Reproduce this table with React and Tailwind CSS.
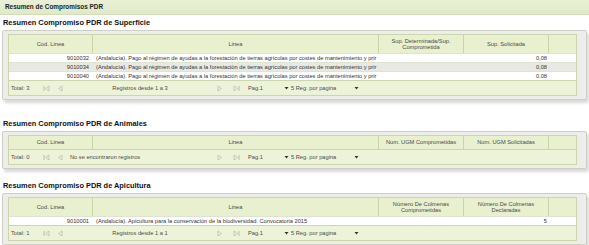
import React from 'react';

const font = { fontFamily: '"Liberation Sans", Arial, sans-serif' };

const Triangle = ({ dir = 'left', bar = false }) => (
    <svg width="7" height="7" viewBox="0 0 7 7" className="shrink-0">
        {dir === 'left' ? (
            <>
                {bar && <rect x="0.5" y="1" width="1" height="5" fill="#b9bfb0" />}
                <path d="M6 1 L2.5 3.5 L6 6 Z" fill="none" stroke="#b9bfb0" strokeWidth="0.8" />
            </>
        ) : (
            <>
                <path d="M1 1 L4.5 3.5 L1 6 Z" fill="none" stroke="#b9bfb0" strokeWidth="0.8" />
                {bar && <rect x="5.5" y="1" width="1" height="5" fill="#b9bfb0" />}
            </>
        )}
    </svg>
);

const Caret = () => (
    <svg width="5" height="4" viewBox="0 0 5 4" className="shrink-0">
        <path d="M0.5 1 L4.5 1 L2.5 3.5 Z" fill="#333" />
    </svg>
);

const gridCols = 'grid grid-cols-[84px_286px_85px_85px_29px]';

const Panel = ({ cols, rows, total, message }) => (
    <div className="mx-[2px] w-[585px] border border-[#cfcfc8] bg-[#ededea] pl-[5px] pr-[9px] pt-[3px] pb-[3px] rounded-[2px] shadow-[2px_3px_3px_rgba(0,0,0,0.15)]">
        <div className="border border-[#cbd6ad]">
            {/* Header */}
            <div className={`${gridCols} bg-[#e8f0cf] text-[#4a4a4a]`}>
                {cols.map((c, i) => (
                    <div
                        key={i}
                        className={`flex items-center justify-center text-center leading-[6.5px] ${cols.twoLine ? 'h-[18px]' : 'h-[13px]'} ${i < 4 ? 'border-r border-[#c9d5a8]' : ''}`}
                    >
                        {c}
                    </div>
                ))}
            </div>

            {/* Rows */}
            {rows.map((r, i) => (
                <div
                    key={i}
                    className={`${gridCols} h-[9px] items-center leading-[9px] border-t border-[#dfe3d3] ${i % 2 === 1 ? 'bg-[#e9e9e4]' : 'bg-white'} text-[#333]`}
                >
                    <div className="text-right pr-[4px]">{r[0]}</div>
                    <div className="pl-[3px] whitespace-nowrap overflow-hidden">{r[1]}</div>
                    <div className="text-right pr-[2px]">{r[2]}</div>
                    <div className="text-right pr-[2px]">{r[3]}</div>
                    <div />
                </div>
            ))}

            {/* Footer */}
            <div className="flex items-center h-[15px] bg-[#edf3d8] border-t border-[#cbd6ad] text-[#4a4a4a] whitespace-nowrap">
                <div className="w-[34px] pl-[2px]">Total: {total}</div>
                <Triangle dir="left" bar />
                <div className="w-[6px]" />
                <Triangle dir="left" />
                {message ? (
                    <div className="w-[154px] pl-[7px]">{message}</div>
                ) : (
                    <div className="w-[154px] text-center">Registros desde 1 a {total}</div>
                )}
                <Triangle dir="right" />
                <div className="w-[9px]" />
                <Triangle dir="right" bar />
                <div className="w-[44px] pl-[8px]">Pag.1</div>
                <Caret />
                <div className="w-[65px] pl-[2px]">5 Reg. por pagina</div>
                <Caret />
            </div>
        </div>
    </div>
);

const Heading = ({ children }) => (
    <div className="pl-[3px] h-[14px] flex items-center text-[7.4px] font-bold text-[#111]">{children}</div>
);

const App = () => {
    const sup = ['Cod. Linea', 'Linea', <span>Sup. Determinada/Sup.<br />Comprometida</span>, 'Sup. Solicitada', ''];
    sup.twoLine = true;
    const ani = ['Cod. Linea', 'Linea', 'Num. UGM Comprometidas', 'Num. UGM Solicitadas', ''];
    const api = ['Cod. Linea', 'Linea', <span>Número De Colmenas<br />Comprometidas</span>, <span>Número De Colmenas<br />Declaradas</span>, ''];
    api.twoLine = true;

    const linea = '(Andalucía). Pago al régimen de ayudas a la forestación de tierras agrícolas por costes de mantenimiento y prir';

    return (
        <div className="w-[589px] h-[245px] bg-white overflow-hidden text-[5.7px]" style={font}>
            {/* Title bar */}
            <div className="h-[15px] flex items-center pl-[5px] bg-gradient-to-b from-[#eaf1d6] to-[#dfe9c6] border-b border-[#d3ddb8] text-[6.4px] font-bold text-[#222]">
                Resumen de Compromisos PDR
            </div>

            <div className="mt-[1px]">
                <Heading>Resumen Compromiso PDR de Superficie</Heading>
            </div>
            <Panel
                cols={sup}
                total={3}
                rows={[
                    ['9010032', linea, '', '0,08'],
                    ['9010034', linea, '', '0,08'],
                    ['9010040', linea, '', '0,08'],
                ]}
            />

            <div className="mt-[17px]">
                <Heading>Resumen Compromiso PDR de Animales</Heading>
            </div>
            <Panel cols={ani} total={0} rows={[]} message="No se encontraron registros" />

            <div className="mt-[10px]">
                <Heading>Resumen Compromiso PDR de Apicultura</Heading>
            </div>
            <Panel
                cols={api}
                total={1}
                rows={[
                    ['9010001', '(Andalucía). Apicultura para la conservación de la biodiversidad. Convocatoria 2015', '', '5'],
                ]}
            />
        </div>
    );
};

export default App;
